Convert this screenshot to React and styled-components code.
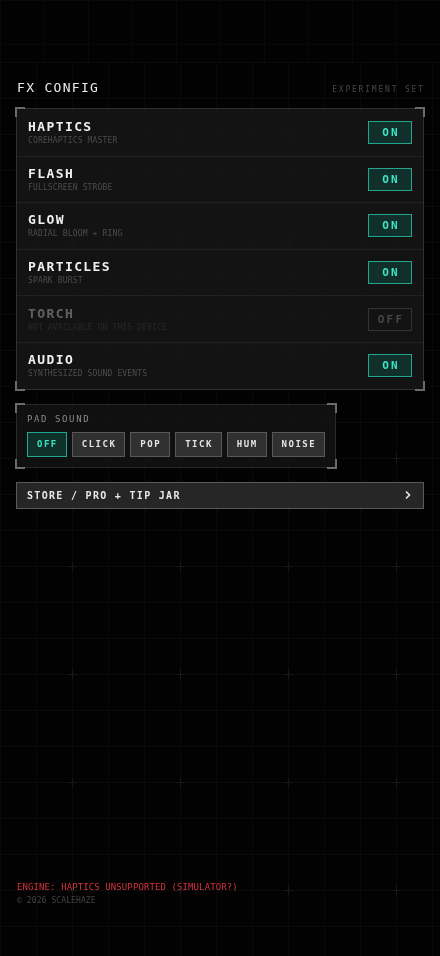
import React from 'react'
import styled, { createGlobalStyle } from 'styled-components'

const GlobalStyle = createGlobalStyle`
  html, body {
    margin: 0;
    padding: 0;
    background: #020202;
    font-family: "DejaVu Sans Mono", "Liberation Mono", monospace;
    -webkit-font-smoothing: antialiased;
  }
  * { box-sizing: border-box; }
`

const effects = [
  { name: 'HAPTICS', hint: 'COREHAPTICS MASTER', on: true },
  { name: 'FLASH', hint: 'FULLSCREEN STROBE', on: true },
  { name: 'GLOW', hint: 'RADIAL BLOOM + RING', on: true },
  { name: 'PARTICLES', hint: 'SPARK BURST', on: true },
  { name: 'TORCH', hint: 'NOT AVAILABLE ON THIS DEVICE', on: false, disabled: true },
  { name: 'AUDIO', hint: 'SYNTHESIZED SOUND EVENTS', on: true },
]

const sounds = ['OFF', 'CLICK', 'POP', 'TICK', 'HUM', 'NOISE']

// blueprint grid behind everything
function Backdrop() {
  return (
    <BackdropLayer>
      <svg width="100%" height="100%">
        <defs>
          <pattern id="topGrid" width="44" height="44" patternUnits="userSpaceOnUse">
            <path d="M0 0.5H44M0.5 0V44" stroke="#090909" strokeWidth="1" fill="none" />
          </pattern>
          <pattern id="mainGrid" x="0" y="62" width="36" height="36" patternUnits="userSpaceOnUse">
            <path d="M0 0.5H36M0.5 0V36" stroke="#0a0a0a" strokeWidth="1" fill="none" />
          </pattern>
          <pattern id="marks" x="0" y="62" width="108" height="108" patternUnits="userSpaceOnUse">
            <path d="M68 72.5H77M72.5 68V77" stroke="#181818" strokeWidth="1" fill="none" />
          </pattern>
        </defs>
        <rect x="0" y="0" width="100%" height="62" fill="url(#topGrid)" />
        <rect x="0" y="62" width="100%" height="100%" fill="url(#mainGrid)" />
        <rect x="0" y="62" width="100%" height="100%" fill="url(#marks)" />
      </svg>
    </BackdropLayer>
  )
}

export default function App() {
  return (
    <>
      <GlobalStyle />
      <Backdrop />
      <Page>
        <Header>
          <Title>FX CONFIG</Title>
          <Tag>EXPERIMENT SET</Tag>
        </Header>

        <Panel>
          <Corners />
          {effects.map((fx) => (
            <Row key={fx.name}>
              <RowText $disabled={fx.disabled}>
                <RowName>{fx.name}</RowName>
                <RowHint>{fx.hint}</RowHint>
              </RowText>
              <Toggle $on={fx.on} $disabled={fx.disabled}>{fx.on ? 'ON' : 'OFF'}</Toggle>
            </Row>
          ))}
        </Panel>

        <SoundPanel>
          <Corners />
          <SoundLabel>PAD SOUND</SoundLabel>
          <Chips>
            {sounds.map((s, i) => (
              <Chip key={s} $active={i === 0}>{s}</Chip>
            ))}
          </Chips>
        </SoundPanel>

        <StoreButton>
          <span>STORE / PRO + TIP JAR</span>
          <svg width="10" height="10" viewBox="0 0 10 10">
            <path d="M3 1.5L6.5 5L3 8.5" stroke="#e8e8e8" strokeWidth="1.6" fill="none" />
          </svg>
        </StoreButton>

        <Footer>
          <EngineNote>ENGINE: HAPTICS UNSUPPORTED (SIMULATOR?)</EngineNote>
          <Copyright>© 2026 SCALEHAZE</Copyright>
        </Footer>
      </Page>
    </>
  )
}

function Corners() {
  return (
    <>
      <Corner $v="top" $h="left" />
      <Corner $v="top" $h="right" />
      <Corner $v="bottom" $h="left" />
      <Corner $v="bottom" $h="right" />
    </>
  )
}

const BackdropLayer = styled.div`
  position: fixed;
  inset: 0;
  z-index: 0;
  pointer-events: none;
`

const Page = styled.div`
  position: relative;
  z-index: 1;
  min-height: 100vh;
  display: flex;
  flex-direction: column;
  padding: 80px 16px 50px;
`

const Header = styled.div`
  display: flex;
  justify-content: space-between;
  align-items: baseline;
  padding: 0 1px;
`

const Title = styled.h1`
  margin: 0;
  font-size: 13px;
  line-height: 16px;
  font-weight: 400;
  letter-spacing: 1.3px;
  color: #ececec;
`

const Tag = styled.span`
  font-size: 8px;
  letter-spacing: 1.8px;
  color: #474747;
  margin-right: -1.8px;
`

const Corner = styled.span`
  position: absolute;
  width: 10px;
  height: 10px;
  ${(p) => p.$v}: -2px;
  ${(p) => p.$h}: -2px;
  border-color: #6a6a6a;
  border-style: solid;
  border-width: 0;
  border-${(p) => p.$v}-width: 2px;
  border-${(p) => p.$h}-width: 2px;
`

const Panel = styled.section`
  position: relative;
  margin-top: 12px;
  border: 1px solid #303030;
  background: rgba(22, 22, 22, 0.88);
`

const Row = styled.div`
  display: flex;
  align-items: center;
  justify-content: space-between;
  height: 46.6px;
  padding: 0 11px;
  & + & {
    border-top: 1px solid #212121;
  }
`

const RowText = styled.div`
  display: flex;
  flex-direction: column;
  gap: 1px;
  opacity: ${(p) => (p.$disabled ? 0.35 : 1)};
`

const RowName = styled.div`
  font-size: 13px;
  line-height: 16px;
  font-weight: 700;
  letter-spacing: 1.4px;
  color: #f0f0f0;
`

const RowHint = styled.div`
  font-size: 8px;
  line-height: 10px;
  letter-spacing: 0.15px;
  color: #4c4c4c;
`

const Toggle = styled.div`
  width: 44px;
  height: 23px;
  display: flex;
  align-items: center;
  justify-content: center;
  padding-left: 2px;
  font-size: 11px;
  font-weight: 700;
  letter-spacing: 2.2px;
  border: 1px solid ${(p) => (p.$disabled ? '#343434' : p.$on ? '#22a68d' : '#444')};
  background: ${(p) => (p.$disabled ? 'transparent' : p.$on ? '#11302b' : '#222')};
  color: ${(p) => (p.$disabled ? '#464646' : p.$on ? '#3de3c2' : '#bbb')};
`

const SoundPanel = styled.section`
  position: relative;
  align-self: flex-start;
  margin-top: 14px;
  padding: 8px 10px 10px;
  border: 1px solid #2a2a2a;
  background: rgba(18, 18, 18, 0.9);
`

const SoundLabel = styled.div`
  font-size: 9px;
  line-height: 12px;
  letter-spacing: 1.6px;
  color: #8a8a8a;
  margin-bottom: 7px;
`

const Chips = styled.div`
  display: flex;
  gap: 5px;
`

const Chip = styled.div`
  height: 25px;
  padding: 0 8px 0 9px;
  display: flex;
  align-items: center;
  font-size: 9px;
  font-weight: 700;
  letter-spacing: 1.5px;
  border: 1px solid ${(p) => (p.$active ? '#22a68d' : '#585858')};
  background: ${(p) => (p.$active ? '#10302a' : '#303030')};
  color: ${(p) => (p.$active ? '#3de3c2' : '#e4e4e4')};
`

const StoreButton = styled.div`
  margin-top: 14px;
  height: 27px;
  display: flex;
  align-items: center;
  justify-content: space-between;
  padding: 0 10px;
  border: 1px solid #5a5a5a;
  background: #262626;
  font-size: 10px;
  font-weight: 700;
  letter-spacing: 1.3px;
  color: #e8e8e8;
`

const Footer = styled.footer`
  margin-top: auto;
  display: flex;
  flex-direction: column;
  gap: 3px;
  padding-left: 1px;
`

const EngineNote = styled.div`
  font-size: 9px;
  line-height: 11px;
  letter-spacing: 0.1px;
  color: #d4323f;
`

const Copyright = styled.div`
  font-size: 8px;
  line-height: 10px;
  letter-spacing: 0.1px;
  color: #454545;
`
